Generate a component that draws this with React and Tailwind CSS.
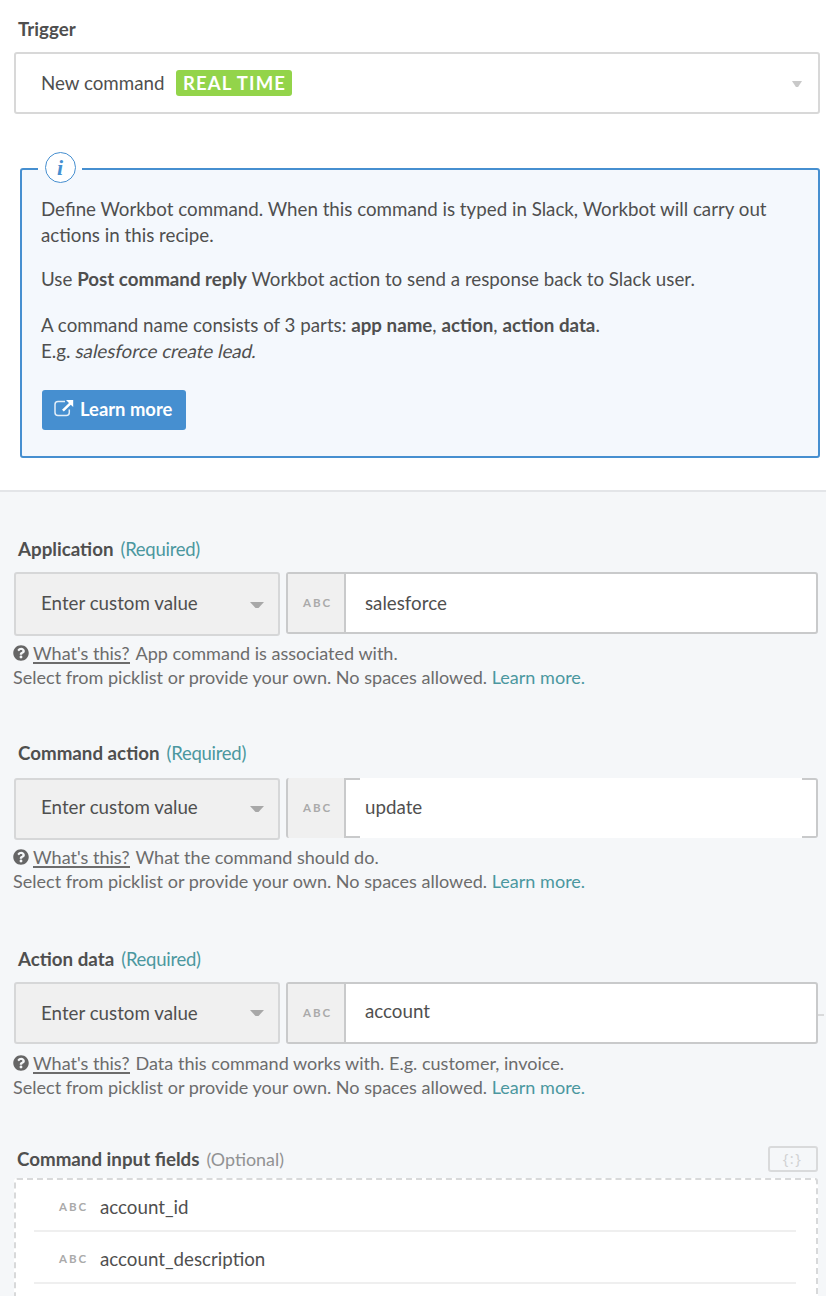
import { FaQuestionCircle } from "react-icons/fa";

function Caret({ className }) {
  return (
    <svg viewBox="0 0 14 7" className={className} preserveAspectRatio="none" fill="currentColor" aria-hidden="true">
      <path d="M0 0h14L8.500 7H5.500z" />
    </svg>
  );
}

function ExternalLink() {
  return (
    <svg viewBox="0 0 20 18" className="-mt-0.5 h-[18px] w-5" fill="none" aria-hidden="true">
      <path d="M11 2.500H4C2 2.500 1 3.700 1 5.500v8c0 1.800 1.200 3 3 3h8.300c1.800 0 3-1.200 3-3V10.500" stroke="#fff" strokeOpacity=".85" strokeWidth="1.500" />
      <path d="M12 1h7.200v7l-2.400-2.300-7 6.800-1.800-1.700 7-6.900z" fill="#fff" />
    </svg>
  );
}

function Label({ name, note, optional }) {
  return (
    <div className="flex items-center gap-[7px] leading-[26px] whitespace-nowrap">
      <span className="font-bold">{name}</span>
      <span className={optional ? "text-[17.900px] text-[#919293]" : "text-[18.500px] tracking-[-0.27px] text-[#4b979f]"}>{note}</span>
    </div>
  );
}

function ValueInput({ value, open, tall }) {
  if (open) {
    return (
      <div className="flex h-[60px] w-[532px]">
        <div className="flex w-[58px] items-center justify-center rounded-l-[3px] border-l-2 border-[#c9cacb] bg-[#f0f0f0] pl-[3px]">
          <Abc />
        </div>
        <div className="w-4 border-2 border-r-0 border-[#c9cacb] bg-white" />
        <div className="flex flex-1 items-center bg-white pb-0.5 pl-[5px]">{value}</div>
        <div className="w-4 rounded-r-[3px] border-2 border-l-0 border-[#c9cacb] bg-white" />
      </div>
    );
  }
  return (
    <div className="flex h-[62px] w-[532px] rounded-[3px] border-2 border-[#c9cacb] bg-white">
      <div className="flex w-[58px] items-center justify-center border-r-2 border-[#c9cacb] bg-[#f0f0f0] pl-[3px]">
        <Abc />
      </div>
      <div className={tall ? "flex items-center pb-1 pl-[19px]" : "flex items-center pl-[19px]"}>{value}</div>
    </div>
  );
}

function Abc() {
  return <span className="text-[11.500px] leading-none font-bold tracking-[2px] text-[#aaa]">ABC</span>;
}

function Help({ children }) {
  return (
    <div className="-ml-px text-[18.060px] leading-6 whitespace-nowrap text-[#6c6c6c]">
      <div className="flex h-6 items-start">
        <FaQuestionCircle className="mt-1 size-4 text-[#666]" />
        <span className="ml-1 h-[23px] border-b-2 border-[#6c6c6c] leading-6">What's this?</span>
        <span className="ml-1.5">{children}</span>
      </div>
      <div>
        Select from picklist or provide your own. No spaces allowed. <a className="text-[#4b979f]">Learn more.</a>
      </div>
    </div>
  );
}

function Field({ name, value, help, open, tall, className, rowClass, selectClass, helpClass }) {
  return (
    <section className={className}>
      <div className="pl-1">
        <Label name={name} note="(Required)" />
      </div>
      <div className={rowClass}>
        <div className={selectClass}>
          <span>Enter custom value</span>
          <Caret className={tall ? "h-[6px] w-[14px] text-[#a8a8a8]" : "mt-[3px] h-[6px] w-[14px] text-[#a8a8a8]"} />
        </div>
        <ValueInput value={value} open={open} tall={tall} />
        {tall && <div className="mt-8 -ml-1.5 h-0.5 w-1.5 bg-[#d9dadb]" />}
      </div>
      <div className={helpClass}>
        <Help>{help}</Help>
      </div>
    </section>
  );
}

export default function App() {
  return (
    <main className="h-[1296px] w-[826px] overflow-hidden bg-white font-['Lato',sans-serif] text-[18.740px] text-[#4f4f4f]">
      <section className="h-[490px] pt-4 pl-[14px]">
        <h2 className="pl-1 leading-[26px] font-bold">Trigger</h2>
        <div className="mt-2.5 flex h-[62px] w-[806px] items-center rounded-[3px] border-2 border-[#d8d8d8] pl-[25px]">
          <span className="w-[123px] whitespace-nowrap">New command</span>
          <span className="ml-3 flex h-[26px] w-[116px] items-center justify-center rounded-[3px] bg-[#93d44a] pt-px pl-px text-[18.500px] font-bold tracking-[1.1px] whitespace-nowrap text-white">
            REAL TIME
          </span>
          <Caret className="mt-0.5 mr-[16px] ml-auto h-[6px] w-[10px] text-[#c9c9c9]" />
        </div>
        <div className="relative mt-[54px] ml-1.5 h-[290px] w-[800px] rounded-[3px] border-2 border-[#468fd0] bg-[#f4f8fd] pt-[26px] pl-[19px] leading-[26px] whitespace-nowrap">
          <div className="absolute -top-5 left-4 flex h-[34px] w-11 items-center justify-center">
            <div className="absolute top-[18px] h-0.5 w-11 bg-white" />
            <div className="relative flex size-[31px] items-center justify-center rounded-full border-[1.500px] border-[#468fd0] bg-white pt-0.5 font-['Liberation_Serif',serif] text-[22px] leading-none font-bold text-[#468fd0] italic">
              i
            </div>
          </div>
          <p>
            Define Workbot command. When this command is typed in Slack, Workbot will carry out
            <br />
            actions in this recipe.
          </p>
          <p className="mt-[18px]">
            Use <b>Post command reply</b> Workbot action to send a response back to Slack user.
          </p>
          <p className="mt-5">
            A command name consists of 3 parts: <b>app name</b>, <b>action</b>, <b>action data</b>.
            <br />
            E.g. <span className="ml-px inline-block -skew-x-12">salesforce create lead.</span>
          </p>
          <a className="mt-[26px] ml-px flex h-10 w-36 items-center gap-1.5 rounded-[3px] bg-[#468fd0] pb-0.5 pl-3 text-[18.400px] font-bold text-white">
            <ExternalLink />
            <span>Learn more</span>
          </a>
        </div>
      </section>

      <section className="h-[806px] border-t-2 border-[#e3e5e8] bg-[#f5f7f9] pl-[14px]">
        <Field
          name="Application"
          value="salesforce"
          help="App command is associated with."
          className="h-[204px] pt-11"
          rowClass="mt-2.5 flex h-16 gap-1.5"
          selectClass="flex h-16 w-[266px] items-center justify-between rounded-[3px] border-2 border-[#d6d7d8] bg-[#f0f0f0] pr-3.5 pb-0.5 pl-[25px]"
          helpClass="mt-[5px]"
        />
        <Field
          name="Command action"
          value="update"
          help="What the command should do."
          open
          className="h-[206px] pt-11"
          rowClass="mt-3 flex h-[62px] gap-1.5"
          selectClass="flex h-[62px] w-[266px] items-center justify-between rounded-[3px] border-2 border-[#d6d7d8] bg-[#f0f0f0] pr-3.5 pb-[3px] pl-[25px]"
          helpClass="mt-[5px]"
        />
        <Field
          name="Action data"
          value="account"
          help="Data this command works with. E.g. customer, invoice."
          tall
          className="h-[200px] pt-11"
          rowClass="mt-2.5 flex h-[62px] gap-1.5"
          selectClass="flex h-[62px] w-[266px] items-center justify-between rounded-[3px] border-2 border-[#d6d7d8] bg-[#f0f0f0] pr-3.5 pl-[25px]"
          helpClass="mt-[7px]"
        />
        <section className="w-[804px] pt-11">
          <div className="flex h-[26px] items-center justify-between pl-[3px]">
            <Label name="Command input fields" note="(Optional)" optional />
            <div className="flex h-[26px] w-[50px] items-center justify-center rounded-[3px] border-2 border-[#d9dadb] pr-px pb-0.5 font-['Open_Sans',sans-serif] text-[15px] leading-none tracking-[1.500px] text-[#d0d1d2]">
              {"{:}"}
            </div>
          </div>
          <div className="mt-1.5 h-[200px] rounded-[3px] border-2 border-dashed border-[#d8d9da] bg-white pr-5 pl-[18px]">
            {["account_id", "account_description"].map((name) => (
              <div key={name} className="flex h-[52px] items-center border-b-2 border-[#efefef] pl-[25px] leading-[26px]">
                <span className="flex w-[41px] items-center pt-[3px]">
                  <Abc />
                </span>
                <span className="pt-1">{name}</span>
              </div>
            ))}
          </div>
        </section>
      </section>
    </main>
  );
}
